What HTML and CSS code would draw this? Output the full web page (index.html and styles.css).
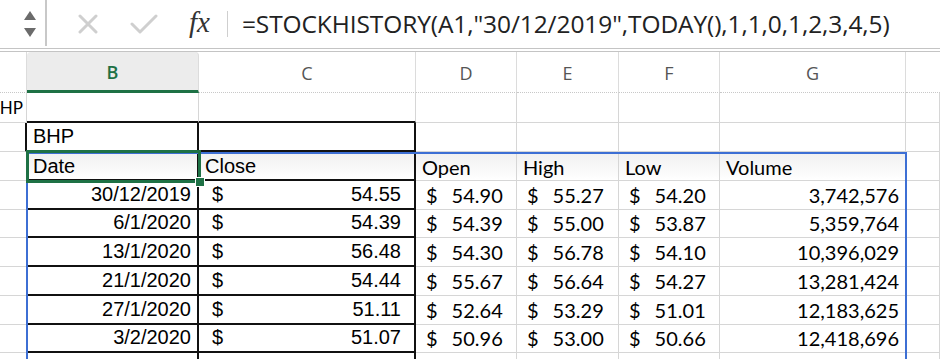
FILE: index.html
```html
<!DOCTYPE html>
<html>
<head>
<meta charset="utf-8">
<link rel="stylesheet" href="styles.css">
</head>
<body>
<div class="toolbar">
  <div class="namebox-arrows">
    <svg width="14" height="30" viewBox="0 0 14 30"><polygon points="7,2 13,11 1,11" fill="#6b6b6b"/><polygon points="1,19 13,19 7,28" fill="#6b6b6b"/></svg>
  </div>
  <div class="tb-divider"></div>
  <div class="icon x-icon"><svg width="20" height="20" viewBox="0 0 20 20"><path d="M2 2 L18 18 M18 2 L2 18" stroke="#cfcfcf" stroke-width="3" stroke-linecap="round"/></svg></div>
  <div class="icon check-icon"><svg width="28" height="22" viewBox="0 0 28 22"><path d="M2 11 L10 19 L26 3" stroke="#cfcfcf" stroke-width="3" fill="none" stroke-linecap="round" stroke-linejoin="round"/></svg></div>
  <div class="fx">fx</div>
  <div class="fx-sep"></div>
  <div class="formula">=STOCKHISTORY(A1,"30/12/2019",TODAY(),1,1,0,1,2,3,4,5)</div>
</div>
<div class="sheet">
  <div class="grid">
    <!-- header -->
    <div class="ch"></div>
    <div class="ch sel">B</div>
    <div class="ch">C</div>
    <div class="ch">D</div>
    <div class="ch">E</div>
    <div class="ch">F</div>
    <div class="ch">G</div>
    <div class="ch last"></div>
    <!-- row 1 -->
    <div class="c a cal tail">HP</div>
    <div class="c"></div><div class="c"></div><div class="c"></div><div class="c"></div><div class="c"></div><div class="c"></div><div class="c"></div>
    <!-- row 2 -->
    <div class="c a bl-r"></div>
    <div class="c ar bk">BHP</div>
    <div class="c ar bk"></div>
    <div class="c"></div><div class="c"></div><div class="c"></div><div class="c"></div><div class="c"></div>
    <!-- row 3 -->
    <div class="c a"></div>
    <div class="c ar bk hd">Date</div>
    <div class="c ar bk hd">Close</div>
    <div class="c cal hd">Open</div>
    <div class="c cal hd">High</div>
    <div class="c cal hd">Low</div>
    <div class="c cal hd">Volume</div>
    <div class="c"></div>
    <!-- data rows -->
    <div class="c a"></div><div class="c ar bk num">30/12/2019</div><div class="c ar bk acc"><span>$</span><span>54.55</span></div><div class="c cal acc2"><span>$</span><span>54.90</span></div><div class="c cal acc2"><span>$</span><span>55.27</span></div><div class="c cal acc2"><span>$</span><span>54.20</span></div><div class="c cal num vol">3,742,576</div><div class="c"></div>
    <div class="c a"></div><div class="c ar bk num">6/1/2020</div><div class="c ar bk acc"><span>$</span><span>54.39</span></div><div class="c cal acc2"><span>$</span><span>54.39</span></div><div class="c cal acc2"><span>$</span><span>55.00</span></div><div class="c cal acc2"><span>$</span><span>53.87</span></div><div class="c cal num vol">5,359,764</div><div class="c"></div>
    <div class="c a"></div><div class="c ar bk num">13/1/2020</div><div class="c ar bk acc"><span>$</span><span>56.48</span></div><div class="c cal acc2"><span>$</span><span>54.30</span></div><div class="c cal acc2"><span>$</span><span>56.78</span></div><div class="c cal acc2"><span>$</span><span>54.10</span></div><div class="c cal num vol">10,396,029</div><div class="c"></div>
    <div class="c a"></div><div class="c ar bk num">21/1/2020</div><div class="c ar bk acc"><span>$</span><span>54.44</span></div><div class="c cal acc2"><span>$</span><span>55.67</span></div><div class="c cal acc2"><span>$</span><span>56.64</span></div><div class="c cal acc2"><span>$</span><span>54.27</span></div><div class="c cal num vol">13,281,424</div><div class="c"></div>
    <div class="c a"></div><div class="c ar bk num">27/1/2020</div><div class="c ar bk acc"><span>$</span><span>51.11</span></div><div class="c cal acc2"><span>$</span><span>52.64</span></div><div class="c cal acc2"><span>$</span><span>53.29</span></div><div class="c cal acc2"><span>$</span><span>51.01</span></div><div class="c cal num vol">12,183,625</div><div class="c"></div>
    <div class="c a"></div><div class="c ar bk num">3/2/2020</div><div class="c ar bk acc"><span>$</span><span>51.07</span></div><div class="c cal acc2"><span>$</span><span>50.96</span></div><div class="c cal acc2"><span>$</span><span>53.00</span></div><div class="c cal acc2"><span>$</span><span>50.66</span></div><div class="c cal num vol">12,418,696</div><div class="c"></div>
    <div class="c a"></div><div class="c ar bk"></div><div class="c ar bk"></div><div class="c"></div><div class="c"></div><div class="c"></div><div class="c"></div><div class="c"></div>
  </div>
  <div class="spill"></div>
  <div class="selbox"><div class="handle"></div></div>
</div>
</body>
</html>
```
FILE: styles.css
```css
* { box-sizing: border-box; }
html, body { margin: 0; padding: 0; background: #fff; }
body { width: 940px; height: 359px; overflow: hidden; font-family: "Liberation Sans", Arial, sans-serif; color: #000; }

.toolbar {
  height: 52px;
  display: flex;
  align-items: center;
  border-bottom: 4px double #c4c4c4;
  position: relative;
}
.namebox-arrows { width: 45px; height: 48px; display: flex; align-items: center; justify-content: flex-end; padding-right: 8px; }
.tb-divider { width: 2px; height: 46px; align-self: flex-start; background: #c8c8c8; }
.icon { display: flex; align-items: center; }
.x-icon { margin-left: 31px; }
.check-icon { margin-left: 32px; }
.fx {
  margin-left: 31px;
  font-family: "Liberation Serif", "DejaVu Serif", serif;
  font-style: italic;
  font-size: 29px;
  color: #333;
  line-height: 1;
  margin-top: -4px;
}
.fx-sep { width: 1px; height: 26px; background: #cfcfcf; margin-left: 17px; }
.formula {
  margin-left: 14px;
  font-family: "Open Sans", sans-serif;
  font-size: 24.5px;
  letter-spacing: -0.1px;
  color: #222;
  margin-top: -2px;
  white-space: nowrap;
}

.sheet { position: relative; }
.grid {
  display: grid;
  grid-template-columns: 27px 172px 217px 101px 102px 101px 186px 34px;
  grid-template-rows: 41px 30px 29px 29px 29px 28px 29px 29px 29px 28px 20px;
}
.ch {
  display: flex; align-items: center; justify-content: center;
  font-family: "Open Sans", sans-serif; font-size: 18px; color: #555;
  border-right: 1px solid #dcdcdc;
  border-bottom: 1px dotted #c8c8c8;
  padding-top: 2px;
}
.ch.sel { background: #ececec; color: #1e7145; font-weight: 600; border-bottom: 3px solid #1e7145; border-top-left-radius: 4px; border-top-right-radius: 4px; }
.ch.last { border-right: none; }

.c {
  border-right: 1px solid #d6d6d6;
  border-bottom: 1px solid #d6d6d6;
  font-size: 20px;
  line-height: 1;
  display: flex;
  align-items: flex-end;
  padding: 0 6px 4px;
  white-space: nowrap;
  overflow: hidden;
}
.cal { font-family: "Lato", "Open Sans", sans-serif; font-size: 20px; }
.c.a { padding: 0; }
.c.tail { font-size: 17px; justify-content: flex-end; padding: 0 3px 6px 0; }
.bk { border-right: 2px solid #111; border-bottom: 2px solid #111; }
.bl-r { border-right: 2px solid #111; }
.grid > .c:nth-child(10), .grid > .c:nth-child(11) { border-bottom: 2px solid #111; }
.ar { padding-left: 6px; }
.hd { background: linear-gradient(#f0f0f0, #fafafa 70%, #fff); padding-bottom: 3px; }
.num { justify-content: flex-end; }
.acc { justify-content: space-between; padding-left: 13px; padding-right: 13px; }
.acc2 { justify-content: flex-start; gap: 14px; padding-left: 10px; }
.vol { padding-right: 6px; }

.spill {
  position: absolute;
  left: 26px; top: 100px;
  width: 881px; height: 220px;
  border: 2px solid #3d6fd4;
  border-bottom: none;
  pointer-events: none;
}
.selbox {
  position: absolute;
  left: 26px; top: 98px;
  width: 175px; height: 33px;
  border: 3px solid #1e7145;
  pointer-events: none;
}
.handle {
  position: absolute;
  right: -7px; bottom: -7px;
  width: 10px; height: 10px;
  background: #1e7145;
  border: 1px solid #fff;
}
```
